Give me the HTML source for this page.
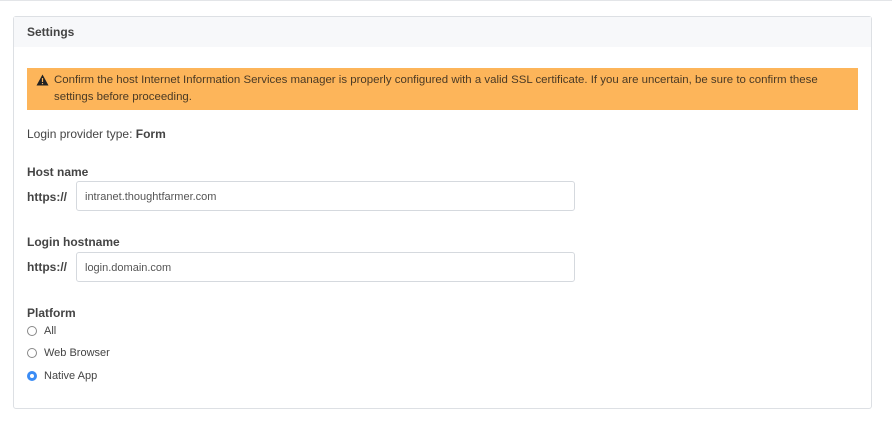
<!DOCTYPE html>
<html><head><style>
body{margin:0;width:892px;height:422px;background:#fff;font-family:"Liberation Sans",sans-serif;color:#333;position:relative;overflow:hidden}
.top{position:absolute;left:0;top:0;width:892px;height:1px;background:#e3e5e8}
.card{position:absolute;left:13px;top:16px;width:857px;height:391px;border:1px solid #dde0e4;border-radius:3px}
.hd{height:30px;background:#f7f8fa;font-weight:bold;font-size:12px;line-height:30px;padding-left:13px;color:#444}
.warn{position:absolute;left:13px;top:51px;width:831px;height:42px;background:#fdb55a;font-size:11.45px;line-height:17px;color:#4a3a25;box-sizing:border-box;padding:4px 10px 0 27px;white-space:nowrap}
.warn svg{position:absolute;left:9px;top:6px}
.t{position:absolute;font-size:12px;color:#444}
.b{font-weight:bold}
.in{position:absolute;left:62px;width:499px;height:30px;border:1px solid #d5d9de;border-radius:3px;font-size:11px;line-height:30px;padding-left:8px;box-sizing:border-box;color:#555}
.r{position:absolute;left:13px;width:10px;height:10px;border:1px solid #888;border-radius:50%;box-sizing:border-box}
.rl{position:absolute;left:30px;font-size:11px;color:#444}
</style></head><body>
<div class="top"></div>
<div class="card">
<div class="hd">Settings</div>
<div class="warn"><svg width="13" height="12" viewBox="0 0 13 12"><path d="M6.5 0.5L12.5 11.5H0.5Z" fill="#222"/><rect x="5.9" y="4" width="1.2" height="4" fill="#fdb55a"/><rect x="5.9" y="9" width="1.2" height="1.2" fill="#fdb55a"/></svg>Confirm the host Internet Information Services manager is properly configured with a valid SSL certificate. If you are uncertain, be sure to confirm these<br>settings before proceeding.</div>
<div class="t" style="left:13px;top:110px">Login provider type: <span class="b">Form</span></div>
<div class="t b" style="left:13px;top:148px">Host name</div>
<div class="t b" style="left:13px;top:173px">https://</div>
<div class="in" style="top:164px">intranet.thoughtfarmer.com</div>
<div class="t b" style="left:13px;top:218px">Login hostname</div>
<div class="t b" style="left:13px;top:243px">https://</div>
<div class="in" style="top:235px">login.domain.com</div>
<div class="t b" style="left:13px;top:289px">Platform</div>
<div class="r" style="top:309px"></div><div class="rl" style="top:308px">All</div>
<div class="r" style="top:331px"></div><div class="rl" style="top:330px">Web Browser</div>
<div class="r" style="top:354px;border:none;background:#3b8cf5"><div style="position:absolute;left:3px;top:3px;width:4px;height:4px;background:#fff;border-radius:50%"></div></div><div class="rl" style="top:353px">Native App</div>
</div>
</body></html>
